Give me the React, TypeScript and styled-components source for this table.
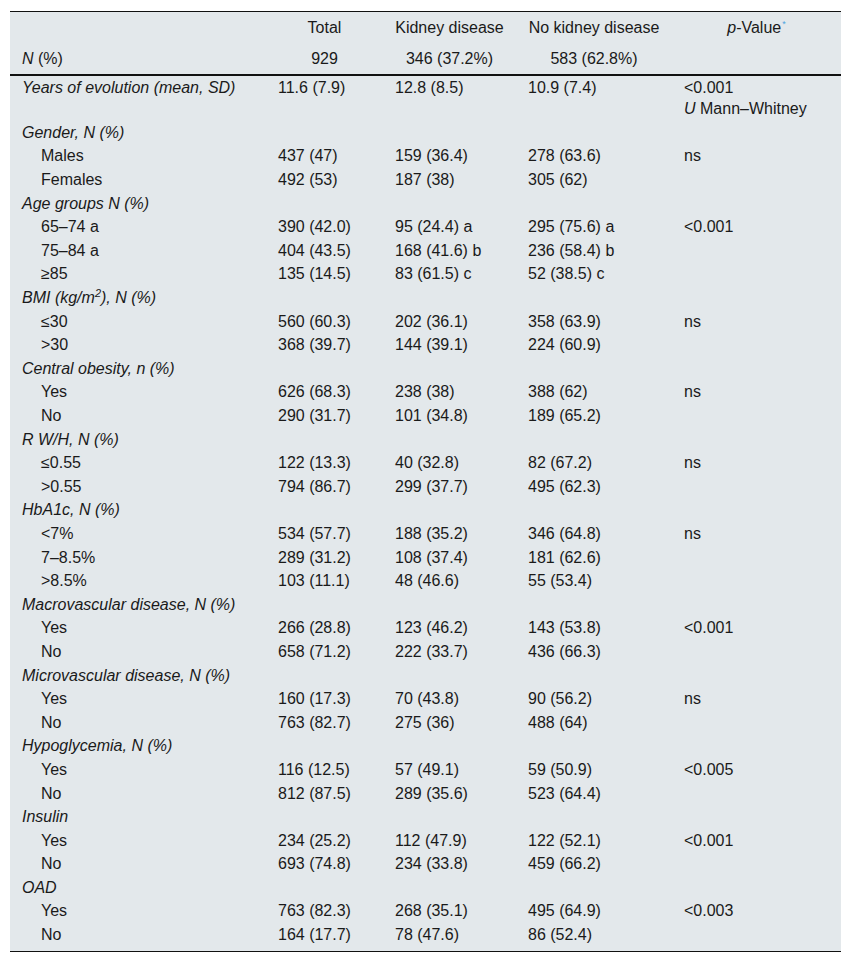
import React from "react";
import styled, { createGlobalStyle } from "styled-components";

const Global = createGlobalStyle`
  html, body { margin: 0; padding: 0; background: #ffffff; }
  body { font-family: "Liberation Sans", Arial, sans-serif; color: #1a1a1a; }
`;

const Page = styled.div`
  padding: 11px 11px 12px 10px;
`;

const Table = styled.table`
  width: 831px;
  border-collapse: collapse;
  table-layout: fixed;
  background: #e3e8eb;
  font-size: 16px;
  line-height: 21px;
  border-top: 1px solid #111;
  border-bottom: 1px solid #111;
`;

const HeadRow = styled.tr<{ $last?: boolean }>`
  ${(p) => (p.$last ? "border-bottom: 2px solid #111;" : "")}
`;

const Th = styled.th<{ $left?: boolean }>`
  font-weight: normal;
  text-align: ${(p) => (p.$left ? "left" : "center")};
  padding: 5px 12px 5px 12px;
  vertical-align: top;
  white-space: nowrap;
`;

const Td = styled.td<{ $indent?: boolean; $italic?: boolean; $end?: boolean }>`
  text-align: left;
  vertical-align: top;
  padding: 1.3px 12px ${(p) => (p.$end ? "5.5px" : "1.3px")} ${(p) => (p.$indent ? "31px" : "12px")};
  font-style: ${(p) => (p.$italic ? "italic" : "normal")};
  white-space: nowrap;
`;

const Em = styled.i``;

const Star = styled.sup`
  color: #4aa3df;
  font-size: 9px;
  vertical-align: top;
  position: relative;
  top: -3px;
  margin-left: 1px;
`;

const Sup = styled.sup`
  font-size: 11px;
  line-height: 0;
`;

type Row =
  | { kind: "group"; label: React.ReactNode }
  | { kind: "item"; label: React.ReactNode; v: React.ReactNode[]; indent?: boolean; italic?: boolean };

const rows: Row[] = [
  {
    kind: "item",
    label: "Years of evolution (mean, SD)",
    italic: true,
    v: [
      "11.6 (7.9)",
      "12.8 (8.5)",
      "10.9 (7.4)",
      <>
        &lt;0.001
        <br />
        <Em>U</Em> Mann–Whitney
      </>,
    ],
  },
  { kind: "group", label: "Gender, N (%)" },
  { kind: "item", indent: true, label: "Males", v: ["437 (47)", "159 (36.4)", "278 (63.6)", "ns"] },
  { kind: "item", indent: true, label: "Females", v: ["492 (53)", "187 (38)", "305 (62)", ""] },
  { kind: "group", label: "Age groups N (%)" },
  { kind: "item", indent: true, label: "65–74 a", v: ["390 (42.0)", "95 (24.4) a", "295 (75.6) a", "<0.001"] },
  { kind: "item", indent: true, label: "75–84 a", v: ["404 (43.5)", "168 (41.6) b", "236 (58.4) b", ""] },
  { kind: "item", indent: true, label: "≥85", v: ["135 (14.5)", "83 (61.5) c", "52 (38.5) c", ""] },
  {
    kind: "group",
    label: (
      <>
        BMI (kg/m<Sup>2</Sup>), N (%)
      </>
    ),
  },
  { kind: "item", indent: true, label: "≤30", v: ["560 (60.3)", "202 (36.1)", "358 (63.9)", "ns"] },
  { kind: "item", indent: true, label: ">30", v: ["368 (39.7)", "144 (39.1)", "224 (60.9)", ""] },
  { kind: "group", label: "Central obesity, n (%)" },
  { kind: "item", indent: true, label: "Yes", v: ["626 (68.3)", "238 (38)", "388 (62)", "ns"] },
  { kind: "item", indent: true, label: "No", v: ["290 (31.7)", "101 (34.8)", "189 (65.2)", ""] },
  { kind: "group", label: "R W/H, N (%)" },
  { kind: "item", indent: true, label: "≤0.55", v: ["122 (13.3)", "40 (32.8)", "82 (67.2)", "ns"] },
  { kind: "item", indent: true, label: ">0.55", v: ["794 (86.7)", "299 (37.7)", "495 (62.3)", ""] },
  { kind: "group", label: "HbA1c, N (%)" },
  { kind: "item", indent: true, label: "<7%", v: ["534 (57.7)", "188 (35.2)", "346 (64.8)", "ns"] },
  { kind: "item", indent: true, label: "7–8.5%", v: ["289 (31.2)", "108 (37.4)", "181 (62.6)", ""] },
  { kind: "item", indent: true, label: ">8.5%", v: ["103 (11.1)", "48 (46.6)", "55 (53.4)", ""] },
  { kind: "group", label: "Macrovascular disease, N (%)" },
  { kind: "item", indent: true, label: "Yes", v: ["266 (28.8)", "123 (46.2)", "143 (53.8)", "<0.001"] },
  { kind: "item", indent: true, label: "No", v: ["658 (71.2)", "222 (33.7)", "436 (66.3)", ""] },
  { kind: "group", label: "Microvascular disease, N (%)" },
  { kind: "item", indent: true, label: "Yes", v: ["160 (17.3)", "70 (43.8)", "90 (56.2)", "ns"] },
  { kind: "item", indent: true, label: "No", v: ["763 (82.7)", "275 (36)", "488 (64)", ""] },
  { kind: "group", label: "Hypoglycemia, N (%)" },
  { kind: "item", indent: true, label: "Yes", v: ["116 (12.5)", "57 (49.1)", "59 (50.9)", "<0.005"] },
  { kind: "item", indent: true, label: "No", v: ["812 (87.5)", "289 (35.6)", "523 (64.4)", ""] },
  { kind: "group", label: "Insulin" },
  { kind: "item", indent: true, label: "Yes", v: ["234 (25.2)", "112 (47.9)", "122 (52.1)", "<0.001"] },
  { kind: "item", indent: true, label: "No", v: ["693 (74.8)", "234 (33.8)", "459 (66.2)", ""] },
  { kind: "group", label: "OAD" },
  { kind: "item", indent: true, label: "Yes", v: ["763 (82.3)", "268 (35.1)", "495 (64.9)", "<0.003"] },
  { kind: "item", indent: true, label: "No", v: ["164 (17.7)", "78 (47.6)", "86 (52.4)", ""] },
];

export default function App() {
  return (
    <Page>
      <Global />
      <Table>
        <colgroup>
          <col style={{ width: 256 }} />
          <col style={{ width: 117 }} />
          <col style={{ width: 133 }} />
          <col style={{ width: 156 }} />
          <col style={{ width: 169 }} />
        </colgroup>
        <thead>
          <HeadRow>
            <Th $left />
            <Th>Total</Th>
            <Th>Kidney disease</Th>
            <Th>No kidney disease</Th>
            <Th>
              <Em>p</Em>-Value<Star>*</Star>
            </Th>
          </HeadRow>
          <HeadRow $last>
            <Th $left>
              <Em>N</Em> (%)
            </Th>
            <Th>929</Th>
            <Th>346 (37.2%)</Th>
            <Th>583 (62.8%)</Th>
            <Th />
          </HeadRow>
        </thead>
        <tbody>
          {rows.map((r, i) => {
            const end = i === rows.length - 1;
            if (r.kind === "group") {
              return (
                <tr key={i}>
                  <Td $italic $end={end}>{r.label}</Td>
                  <Td $end={end} />
                  <Td $end={end} />
                  <Td $end={end} />
                  <Td $end={end} />
                </tr>
              );
            }
            return (
              <tr key={i}>
                <Td $indent={r.indent} $italic={r.italic} $end={end}>
                  {r.label}
                </Td>
                {r.v.map((v, j) => (
                  <Td key={j} $end={end}>
                    {v}
                  </Td>
                ))}
              </tr>
            );
          })}
        </tbody>
      </Table>
    </Page>
  );
}
